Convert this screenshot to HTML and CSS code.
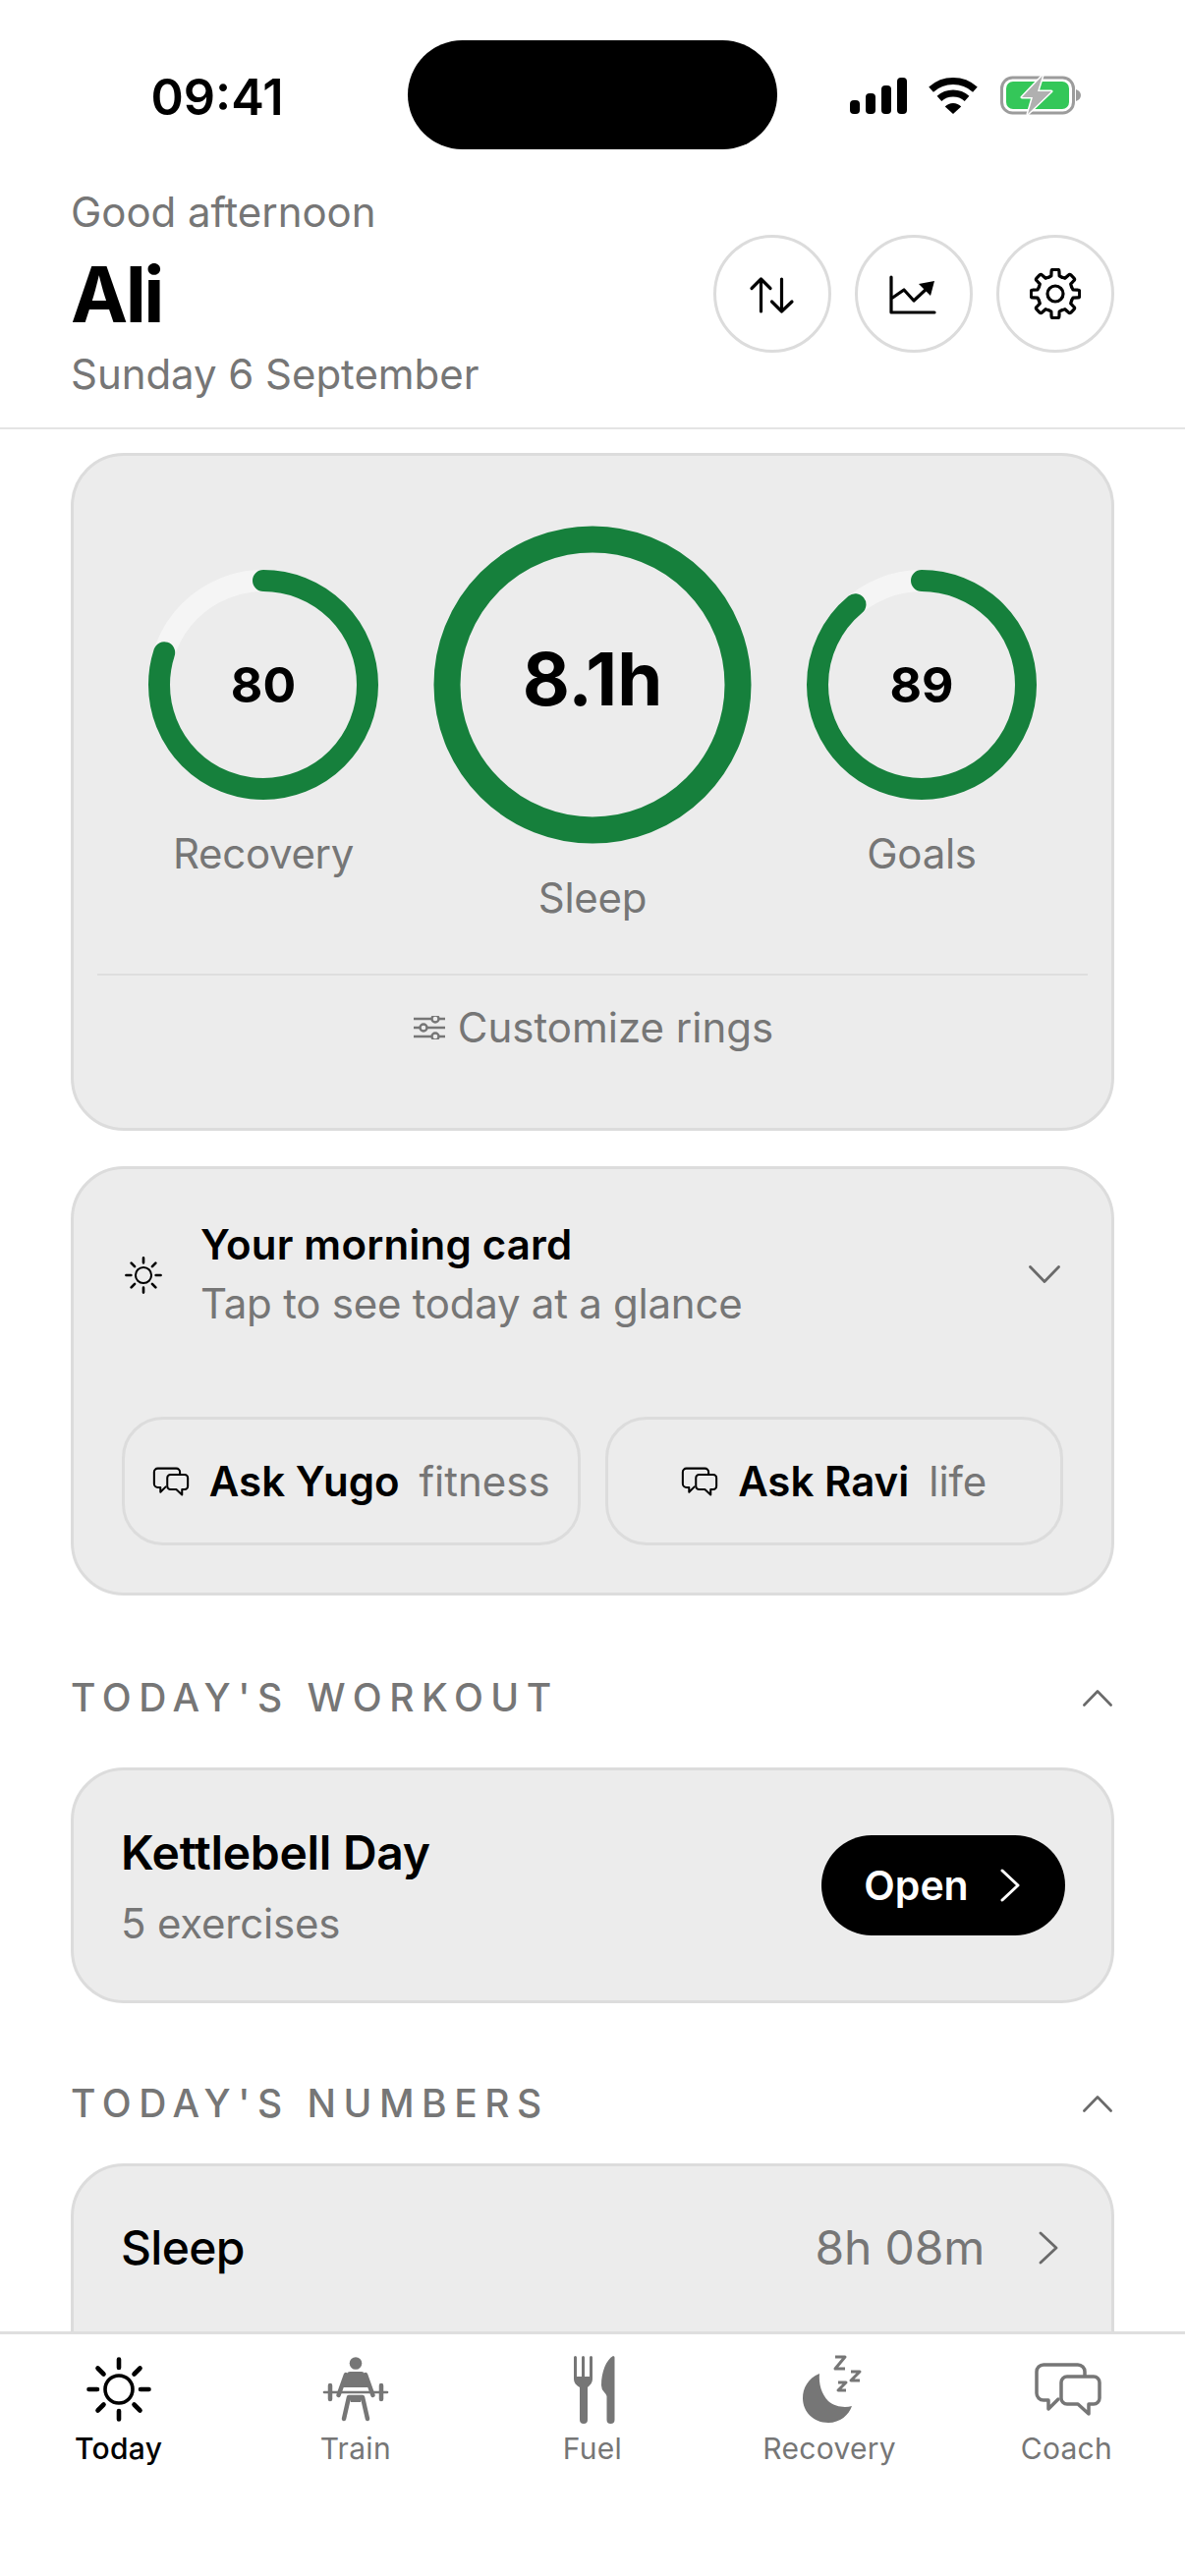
FILE: index.html
```html
<!DOCTYPE html>
<html lang="en">
<head>
<meta charset="utf-8">
<title>Today</title>
<link rel="stylesheet" href="styles.css">
</head>
<body>
<svg class="defs" width="0" height="0" aria-hidden="true">
  <symbol id="sun" viewBox="0 0 66 66">
    <circle cx="33" cy="33" r="14" fill="none" stroke="currentColor" stroke-width="3.6"/>
    <path d="M33 2.500V11M33 55V63.500M2.500 33H11M55 33H63.500M11.500 11.500L17.500 17.500M48.500 48.500L54.500 54.500M54.500 11.500L48.500 17.500M17.500 48.500L11.500 54.500" fill="none" stroke="currentColor" stroke-width="4.6" stroke-linecap="round"/>
  </symbol>
  <symbol id="chat" viewBox="3 7 70 56">
    <path d="M55 21V17a7 7 0 0 0-7-7H13a7 7 0 0 0-7 7V39a7 7 0 0 0 7 7H18V55L28 45" fill="none" stroke="currentColor" stroke-linejoin="round" stroke-linecap="round"/>
    <path d="M37 22H64a6 6 0 0 1 6 6V44a6 6 0 0 1-6 6H59V60L48 50H37a6 6 0 0 1-6-6V28a6 6 0 0 1 6-6Z" fill="none" stroke="currentColor" stroke-linejoin="round"/>
  </symbol>
</svg>
<div class="app">
  <div class="status">
    <div class="time">09:41</div>
    <div class="island"></div>
    <div class="status-icons">
      <svg class="i-signal" width="58" height="37" viewBox="0 0 58 37"><rect x="0" y="23" width="10" height="14" rx="4"/><rect x="16" y="16" width="10" height="21" rx="4"/><rect x="32" y="8" width="10" height="29" rx="4"/><rect x="48" y="0" width="10" height="37" rx="4"/></svg>
      <svg class="i-wifi" width="50" height="37" viewBox="0 0 50 37"><path d="M2.600 12.100A33.500 33.500 0 0 1 47.400 12.100M10.950 21.400A21 21 0 0 1 39.050 21.400" fill="none" stroke="#000" stroke-width="7"/><path d="M25 37L16.800 29.600A11 11 0 0 1 33.200 29.600Z"/></svg>
      <svg class="i-batt" width="84" height="42" viewBox="0 0 84 42"><rect x="1.500" y="3" width="73" height="36" rx="11" fill="none" stroke="#9c9c9c" stroke-width="3"/><rect x="6" y="7" width="64" height="28" rx="7" fill="#34c759"/><path d="M77 15C80 16 82 18 82 21C82 24 80 26 77 27Z" fill="#9c9c9c"/><path d="M43 1L22 23H33L28 40L52 17H38Z" fill="#b0b0b0" stroke="#fff" stroke-width="3" stroke-linejoin="round" paint-order="stroke"/></svg>
    </div>
  </div>
  <header class="header">
    <div class="who">
      <div class="greet">Good afternoon</div>
      <div class="name">Ali</div>
      <div class="date">Sunday 6 September</div>
    </div>
    <div class="actions">
      <button class="round"><svg width="48" height="48" viewBox="0 0 48 48" class="line"><path d="M12.500 42V9M3 18.500L12.500 9L22 18.500M33.500 9V42M23.500 32L33.500 42L44 32"/></svg></button>
      <button class="round"><svg width="52" height="48" viewBox="0 0 52 48" class="line"><path d="M3 7V43H47M3 29L16 20L26 31L40 18"/><path class="solid" d="M47 11L31 14L43 26Z"/></svg></button>
      <button class="round"><svg width="52" height="52" viewBox="0 0 52 52" class="line">
        <circle cx="26" cy="26" r="8"/>
        <path d="M19.110 9.370Q20.800 8.600 21.840 7.970L22.090 3Q22.100 1.300 23.800 1.300H28.200Q29.900 1.300 29.910 3L30.160 7.970Q31.200 8.600 32.890 9.370"/>
        <path transform="rotate(45 26 26)" d="M19.110 9.370Q20.800 8.600 21.840 7.970L22.090 3Q22.100 1.300 23.800 1.300H28.200Q29.900 1.300 29.910 3L30.160 7.970Q31.200 8.600 32.890 9.370"/>
        <path transform="rotate(90 26 26)" d="M19.110 9.370Q20.800 8.600 21.840 7.970L22.090 3Q22.100 1.300 23.800 1.300H28.200Q29.900 1.300 29.910 3L30.160 7.970Q31.200 8.600 32.890 9.370"/>
        <path transform="rotate(135 26 26)" d="M19.110 9.370Q20.800 8.600 21.840 7.970L22.090 3Q22.100 1.300 23.800 1.300H28.200Q29.900 1.300 29.910 3L30.160 7.970Q31.200 8.600 32.890 9.370"/>
        <path transform="rotate(180 26 26)" d="M19.110 9.370Q20.800 8.600 21.840 7.970L22.090 3Q22.100 1.300 23.800 1.300H28.200Q29.900 1.300 29.910 3L30.160 7.970Q31.200 8.600 32.890 9.370"/>
        <path transform="rotate(225 26 26)" d="M19.110 9.370Q20.800 8.600 21.840 7.970L22.090 3Q22.100 1.300 23.800 1.300H28.200Q29.900 1.300 29.910 3L30.160 7.970Q31.200 8.600 32.890 9.370"/>
        <path transform="rotate(270 26 26)" d="M19.110 9.370Q20.800 8.600 21.840 7.970L22.090 3Q22.100 1.300 23.800 1.300H28.200Q29.900 1.300 29.910 3L30.160 7.970Q31.200 8.600 32.890 9.370"/>
        <path transform="rotate(315 26 26)" d="M19.110 9.370Q20.800 8.600 21.840 7.970L22.090 3Q22.100 1.300 23.800 1.300H28.200Q29.900 1.300 29.910 3L30.160 7.970Q31.200 8.600 32.890 9.370"/>
      </svg></button>
    </div>
  </header>

  <main class="scroll">
    <section class="card rings-card">
      <div class="rings">
        <div class="ring-item">
          <div class="ring">
            <svg width="234" height="234" viewBox="0 0 234 234"><circle class="track" cx="117" cy="117" r="106" stroke-width="22"/><circle class="prog" cx="117" cy="117" r="106" stroke-width="22" pathLength="100" stroke-dasharray="80 100" transform="rotate(-90 117 117)"/></svg>
            <span class="val">80</span>
          </div>
          <div class="ring-label">Recovery</div>
        </div>
        <div class="ring-item">
          <div class="ring">
            <svg width="324" height="324" viewBox="0 0 324 324"><circle class="prog" cx="162" cy="162" r="148" stroke-width="27"/></svg>
            <span class="val big">8.1h</span>
          </div>
          <div class="ring-label">Sleep</div>
        </div>
        <div class="ring-item">
          <div class="ring">
            <svg width="234" height="234" viewBox="0 0 234 234"><circle class="track" cx="117" cy="117" r="106" stroke-width="22"/><circle class="prog" cx="117" cy="117" r="106" stroke-width="22" pathLength="100" stroke-dasharray="89 100" transform="rotate(-90 117 117)"/></svg>
            <span class="val">89</span>
          </div>
          <div class="ring-label">Goals</div>
        </div>
      </div>
      <div class="customize">
        <svg width="32" height="24" viewBox="0 0 32 24" class="sliders"><path d="M0 3H18M26 3H32M0 12H6M14 12H32M0 21H18M26 21H32"/><circle cx="22" cy="3" r="3.500"/><circle cx="10" cy="12" r="3.500"/><circle cx="22" cy="21" r="3.500"/></svg>
        <span>Customize rings</span>
      </div>
    </section>

    <section class="card morning">
      <div class="morning-head">
        <svg class="sun-sm" width="38" height="38"><use href="#sun"/></svg>
        <div class="morning-text">
          <div class="morning-title">Your morning card</div>
          <div class="morning-sub">Tap to see today at a glance</div>
        </div>
        <svg class="chev" width="32" height="18" viewBox="0 0 32 18"><path d="M1.500 1.500L16 16.500L30.500 1.500"/></svg>
      </div>
      <div class="asks">
        <button class="ask"><svg class="chat-sm" width="38" height="30"><use href="#chat"/></svg><b>Ask Yugo</b><span>fitness</span></button>
        <button class="ask"><svg class="chat-sm" width="38" height="30"><use href="#chat"/></svg><b>Ask Ravi</b><span>life</span></button>
      </div>
    </section>

    <div class="sec-head sec-first">
      <h2>TODAY'S WORKOUT</h2>
      <svg class="chev" width="30" height="17" viewBox="0 0 32 18"><path d="M1.500 16.500L16 1.500L30.500 16.500"/></svg>
    </div>
    <section class="card workout">
      <div>
        <div class="w-title">Kettlebell Day</div>
        <div class="w-sub">5 exercises</div>
      </div>
      <button class="open">Open<svg width="20" height="34" viewBox="0 0 20 34"><path d="M2 2L18 17L2 32"/></svg></button>
    </section>

    <div class="sec-head sec-second">
      <h2>TODAY'S NUMBERS</h2>
      <svg class="chev" width="30" height="17" viewBox="0 0 32 18"><path d="M1.500 16.500L16 1.500L30.500 16.500"/></svg>
    </div>
    <section class="card numbers">
      <div class="num-row">
        <span class="num-name">Sleep</span>
        <span class="num-val">8h 08m</span>
        <svg class="chev" width="20" height="34" viewBox="0 0 20 34"><path d="M2 2L18 17L2 32"/></svg>
      </div>
    </section>
  </main>

  <nav class="tabs">
    <div class="tab active">
      <svg class="tab-icon" width="72" height="72" viewBox="0 0 72 72"><use href="#sun" x="3" y="2" width="66" height="66"/></svg>
      <span>Today</span>
    </div>
    <div class="tab">
      <svg class="tab-icon" width="72" height="72" viewBox="0 0 72 72"><g transform="translate(3 2)" fill="#767676">
        <circle cx="33" cy="6.500" r="6.300"/>
        <path d="M27 15H39Q41 15 42 17L47 31H19L24 17Q25 15 27 15Z"/>
        <path d="M23 18L15.500 39M43 18L50.500 39" fill="none" stroke="#767676" stroke-width="4.500" stroke-linecap="round"/>
        <path d="M1 36H65" fill="none" stroke="#767676" stroke-width="2.600" stroke-linecap="round"/>
        <path d="M7 29V43M59 29V43" fill="none" stroke="#767676" stroke-width="4.500" stroke-linecap="round"/>
        <path d="M26 41H40L45 63M26 41L21 63" fill="none" stroke="#767676" stroke-width="4.500" stroke-linecap="round" stroke-linejoin="round"/>
        <path d="M26 40H40L38 46H28Z"/>
      </g></svg>
      <span>Train</span>
    </div>
    <div class="tab">
      <svg class="tab-icon" width="72" height="72" viewBox="0 0 72 72"><path fill="#767676" d="M17 2.500a1.500 1.500 0 0 1 3 0V22H25V2.500a1.500 1.500 0 0 1 3 0V22H33V2.500a1.500 1.500 0 0 1 3 0V24C36 29 33 31 31 33V66a4 4 0 0 1-8 0V33C20 31 17 29 17 24ZM57 1a1.500 1.500 0 0 1 1.500 1.500V66a4 4 0 0 1-8 0V42Q50 40 48 38Q45 35 45 31C45 17 50 5 57 1Z"/></svg>
      <span>Fuel</span>
    </div>
    <div class="tab">
      <svg class="tab-icon" width="72" height="72" viewBox="0 0 72 72"><path fill="#767676" d="M26 19C14 24 9 34 9 44C9 58 20 69 35 69C47 69 56 61 59 52C52 54 42 53 35 47C28 40 25 29 26 19Z"/><path d="M42 2H52L42 14H52M58 17H67L58 26H67M45 28H53L45 36H53" fill="none" stroke="#767676" stroke-width="3" stroke-linejoin="round"/></svg>
      <span>Recovery</span>
    </div>
    <div class="tab">
      <svg class="tab-icon chat-lg" width="72" height="72" viewBox="0 0 72 72"><use href="#chat" x="3" y="7" width="70" height="56"/></svg>
      <span>Coach</span>
    </div>
  </nav>
</div>
</body>
</html>
```

FILE: styles.css
```css
* { box-sizing: border-box; }
html, body { margin: 0; padding: 0; background: #fff; }
body { font-family: Inter, "Liberation Sans", sans-serif; color: #000; }
.defs { position: absolute; }
.app { width: 1206px; height: 2622px; display: flex; flex-direction: column; overflow: hidden; background: #fff; }

.status { display: flex; height: 152px; padding-top: 41px; flex: none; }
.time { width: 415px; padding: 29px 0 0 27px; text-align: center; font-size: 50.500px; font-weight: 600; line-height: 58px; }
.island { width: 376px; height: 111px; background: #000; border-radius: 56px; }
.status-icons { display: flex; align-items: center; padding-left: 74px; height: 112px; gap: 22px; }
.i-wifi { margin-right: 1px; }

.header { flex: none; display: flex; justify-content: space-between; align-items: center; padding: 37px 72px 27px; border-bottom: 2px solid #e4e4e4; }
.greet, .date { font-size: 42px; line-height: 54px; color: #767676; letter-spacing: -0.05px; }
.name { font-size: 78px; line-height: 96px; font-weight: 700; margin: 9px 0 6px; letter-spacing: -2.500px; }
.actions { display: flex; gap: 24px; margin-bottom: -1px; }
.round { width: 120px; height: 120px; border: 3px solid #dcdcdc; border-radius: 50%; background: #fff; padding: 0; display: flex; align-items: center; justify-content: center; }
.line { fill: none; stroke: #000; stroke-width: 3.200; stroke-linecap: round; stroke-linejoin: round; }
.line .solid { fill: #000; stroke: none; }

.scroll { flex: 1; min-height: 0; overflow: hidden; padding: 24px 72px 0; }
.card { background: #ececec; border: 3px solid #dcdcdc; border-radius: 54px; }

.rings-card { padding: 71px 24px 0; height: 690px; }
.rings { display: grid; grid-template-columns: repeat(3, 335px); justify-content: center; align-items: center; padding: 0 0 50px; border-bottom: 2px solid #dedede; }
.ring-item { display: flex; flex-direction: column; align-items: center; gap: 28px; }
.ring { display: grid; place-items: center; }
.ring > * { grid-area: 1 / 1; }
.track, .prog { fill: none; }
.track { stroke: #f5f5f5; }
.prog { stroke: #16803c; stroke-linecap: round; }
.val { font-size: 50px; font-weight: 700; }
.val.big { font-size: 74px; margin-top: -13px; }
.ring-label { font-size: 42px; line-height: 54px; color: #767676; letter-spacing: -0.300px; }
.customize { display: flex; justify-content: center; align-items: center; gap: 13px; padding: 26px 0 0 2px; font-size: 42px; line-height: 54px; color: #767676; }
.sliders { fill: none; stroke: #767676; stroke-width: 2.400; }

.morning { margin-top: 36px; height: 437px; padding: 47px 49px 0; }
.morning-head { display: flex; align-items: center; padding-right: 3px; }
.sun-sm { color: #000; margin-left: 3px; margin-top: 2px; }
.morning-text { flex: 1; margin-left: 39px; }
.morning-title { font-size: 42px; line-height: 60px; font-weight: 600; letter-spacing: 0.200px; }
.morning-sub { font-size: 42px; line-height: 60px; color: #767676; letter-spacing: -0.250px; }
.asks { display: grid; grid-template-columns: 1fr 1fr; gap: 25px; margin-top: 85px; }
.ask { height: 131px; border: 3px solid #dcdcdc; border-radius: 42px; background: transparent; display: flex; align-items: center; justify-content: center; gap: 20px; font-family: inherit; font-size: 42px; color: #000; padding: 0; }
.ask b { font-weight: 600; }
.ask span { color: #767676; }
.chat-sm { color: #000; stroke-width: 3.800; }
.chev { fill: none; stroke: #6a6a6a; stroke-width: 2.800; stroke-linecap: round; stroke-linejoin: round; flex: none; }

.sec-head { display: flex; justify-content: space-between; align-items: center; padding-right: 2px; }
.sec-first { margin-top: 80px; }
.sec-second { margin-top: 78px; }
.sec-head h2 { margin: 0; font-size: 39px; line-height: 48px; font-weight: 500; letter-spacing: 7.500px; color: #767676; }

.workout { margin-top: 47px; height: 240px; padding: 2px 47px 0 48px; display: flex; justify-content: space-between; align-items: center; }
.w-title { font-size: 48px; line-height: 60px; font-weight: 600; letter-spacing: -0.300px; }
.w-sub { font-size: 42px; line-height: 54px; color: #767676; margin-top: 15px; letter-spacing: -0.200px; }
.open { width: 248px; height: 102px; margin-top: -2px; border: 0; border-radius: 51px; background: #000; color: #fff; font-family: inherit; font-size: 41px; font-weight: 600; display: flex; align-items: center; justify-content: center; gap: 32px; padding: 0 3px 0 0; }
.open svg { fill: none; stroke: #fff; stroke-width: 3; stroke-linecap: round; stroke-linejoin: round; }

.numbers { margin-top: 37px; padding: 0 54px 40px 48px; border-radius: 54px 54px 0 0; }
.num-row { height: 165px; display: flex; align-items: center; }
.num-name { flex: 1; font-size: 48px; font-weight: 500; letter-spacing: -0.700px; }
.num-val { font-size: 48px; color: #767676; margin-right: 55px; letter-spacing: -0.200px; }

.tabs { flex: none; height: 249px; border-top: 3px solid #dedede; background: #fff; display: grid; grid-template-columns: repeat(5, 1fr); padding-top: 21px; }
.tab { display: flex; flex-direction: column; align-items: center; color: #767676; font-size: 30px; line-height: 40px; letter-spacing: 0.300px; }
.tab.active { color: #000; font-weight: 500; }
.tab-icon { display: block; margin-bottom: 3px; color: inherit; overflow: visible; }
.chat-lg { stroke-width: 3.500; }
```
